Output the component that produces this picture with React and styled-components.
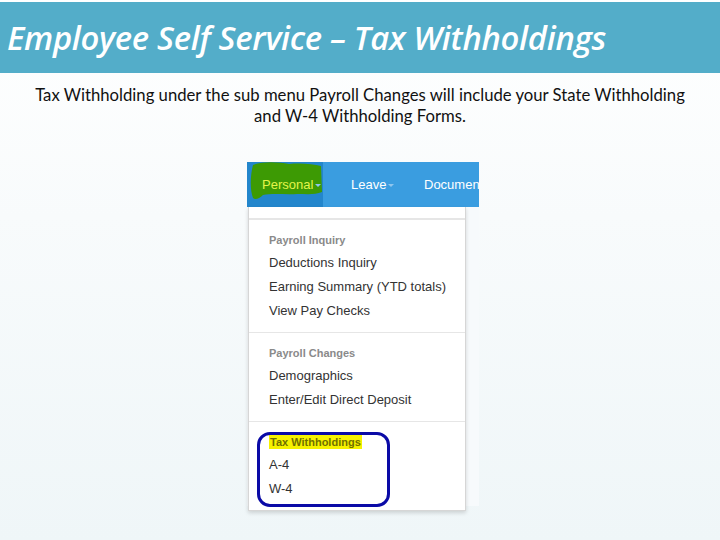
import React from 'react'
import styled, { createGlobalStyle } from 'styled-components'

const GlobalStyle = createGlobalStyle`
  html, body {
    margin: 0;
    padding: 0;
  }
  body {
    width: 720px;
    height: 540px;
    overflow: hidden;
    background: linear-gradient(180deg, #ffffff 0%, #f8fbfc 40%, #eff6f8 100%);
  }
`

const Page = styled.div`
  width: 720px;
  height: 540px;
  display: flex;
  flex-direction: column;
  padding-top: 2px;
  box-sizing: border-box;
`

const TitleBar = styled.div`
  height: 71px;
  background: #53adc9;
  display: flex;
  align-items: center;
  padding-left: 7px;
  padding-bottom: 1px;
  box-sizing: border-box;
`

const Title = styled.h1`
  margin: 0;
  color: #ffffff;
  font-family: "Open Sans", "Liberation Sans", sans-serif;
  font-style: italic;
  font-weight: 600;
  font-size: 32.8px;
  letter-spacing: -0.3px;
  white-space: nowrap;
`

const Intro = styled.p`
  margin: 12px 0 0;
  text-align: center;
  font-family: "Lato", "Liberation Sans", sans-serif;
  font-size: 16.7px;
  line-height: 21px;
  color: #111;
`

const Shot = styled.div`
  margin: 35px 0 0 247px;
  width: 232px;
  height: 344px;
  background: #f7fafc;
  display: flex;
  flex-direction: column;
  font-family: "Liberation Sans", Arial, sans-serif;
`

const NavBar = styled.div`
  flex: none;
  height: 45px;
  background: #3a9de0;
  display: flex;
  overflow: hidden;
`

const Tab = styled.div`
  position: relative;
  flex: none;
  width: ${p => p.$w}px;
  display: flex;
  align-items: center;
  padding-left: ${p => p.$pad || 14}px;
  box-sizing: border-box;
  background: ${p => (p.$active ? '#2386cc' : 'transparent')};
  color: #ffffff;
  font-size: 13px;
  white-space: nowrap;
`

const Caret = styled.span`
  display: inline-block;
  margin-left: 2px;
  border-left: 3.5px solid transparent;
  border-right: 3.5px solid transparent;
  border-top: 3.5px solid #8fc6ee;
  vertical-align: middle;
`

const Highlight = styled.svg`
  position: absolute;
  left: 2px;
  top: 0;
`

const TabLabel = styled.span`
  position: relative;
  color: ${p => p.$color || '#ffffff'};
`

const Menu = styled.div`
  position: relative;
  margin-left: 1px;
  width: 218px;
  flex: 1;
  background: #ffffff;
  border: 1px solid #d6d6d6;
  border-top: none;
  box-shadow: 0 2px 4px rgba(0, 0, 0, 0.15);
  box-sizing: border-box;
  padding-top: 11px;
`

const Section = styled.div`
  border-top: 2px solid #e6e6e6;
  padding: 10px 0 9px;
  & + & {
    border-top-width: 1px;
  }
`

const Header = styled.div`
  padding-left: 20px;
  height: 21px;
  line-height: 21px;
  font-size: 11px;
  font-weight: bold;
  color: #8a8a8a;
`

const Mark = styled.span`
  background: #f6f200;
  color: #707000;
  padding: 1px 1px;
`

const Item = styled.div`
  padding-left: 20px;
  height: 24px;
  line-height: 24px;
  font-size: 13px;
  color: #333333;
`

const Circle = styled.div`
  position: absolute;
  left: 8px;
  bottom: 3px;
  width: 133px;
  height: 75px;
  border: 3px solid #0a0aa6;
  border-radius: 13px;
  box-sizing: border-box;
`

export default function App() {
  return (
    <>
      <GlobalStyle />
      <Page>
        <TitleBar>
          <Title>Employee Self Service – Tax Withholdings</Title>
        </TitleBar>
        <Intro>
          Tax Withholding under the sub menu Payroll Changes will include your State Withholding
          <br />
          and W-4 Withholding Forms.
        </Intro>
        <Shot>
          <NavBar>
            <Tab $w={76} $active $pad={15}>
              <Highlight width="74" height="40" viewBox="0 0 74 40">
                <path
                  d="M4 3 C14 -1 30 0 40 2 C52 1 64 2 72 4 L73 30 C66 33 58 32 48 32 C38 33 24 31 14 33 C10 37 6 38 4 36 C1 28 1 14 4 3 Z"
                  fill="#3d9a04"
                />
              </Highlight>
              <TabLabel $color="#e4f54a">
                Personal<Caret />
              </TabLabel>
            </Tab>
            <Tab $w={88} $pad={28}>
              <TabLabel>
                Leave<Caret />
              </TabLabel>
            </Tab>
            <Tab $w={68} $pad={13}>
              <TabLabel>Documen</TabLabel>
            </Tab>
          </NavBar>
          <Menu>
            <Section>
              <Header>Payroll Inquiry</Header>
              <Item>Deductions Inquiry</Item>
              <Item>Earning Summary (YTD totals)</Item>
              <Item>View Pay Checks</Item>
            </Section>
            <Section>
              <Header>Payroll Changes</Header>
              <Item>Demographics</Item>
              <Item>Enter/Edit Direct Deposit</Item>
            </Section>
            <Section>
              <Header>
                <Mark>Tax Withholdings</Mark>
              </Header>
              <Item>A-4</Item>
              <Item>W-4</Item>
            </Section>
            <Circle />
          </Menu>
        </Shot>
      </Page>
    </>
  )
}
